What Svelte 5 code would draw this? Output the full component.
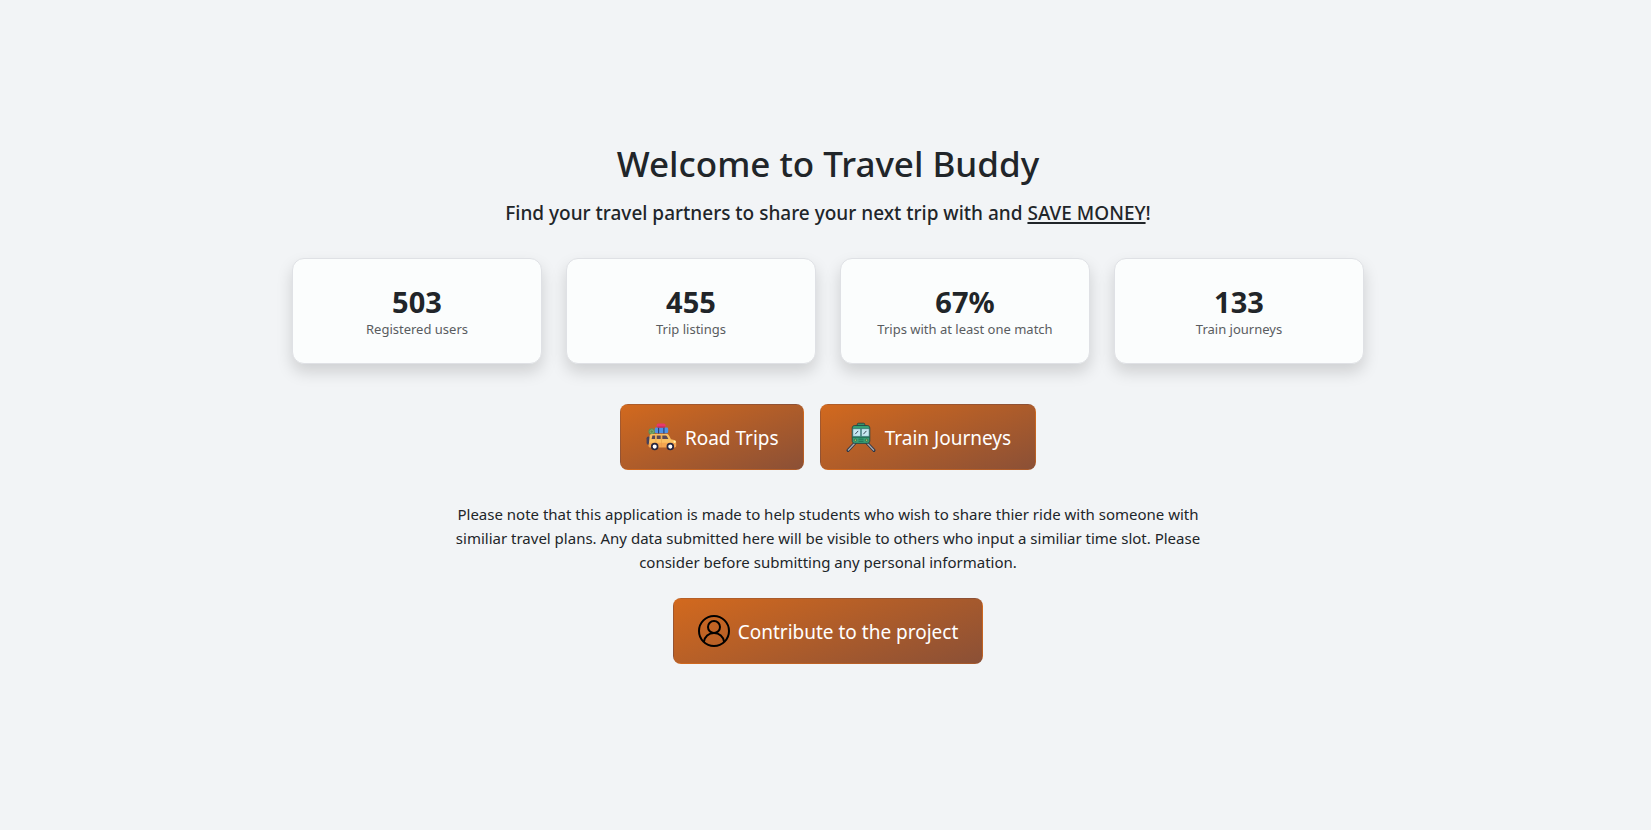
<script>
  const stats = [
    { value: '503', label: 'Registered users' },
    { value: '455', label: 'Trip listings' },
    { value: '67%', label: 'Trips with at least one match' },
    { value: '133', label: 'Train journeys' }
  ];
</script>

<main class="page">
  <header class="intro">
    <h1>Welcome to Travel Buddy</h1>
    <p class="tagline">Find your travel partners to share your next trip with and <u>SAVE MONEY</u>!</p>
  </header>

  <section class="stats" aria-label="Statistics">
    {#each stats as stat}
      <div class="card">
        <strong>{stat.value}</strong>
        <span>{stat.label}</span>
      </div>
    {/each}
  </section>

  <nav class="actions">
    <a class="button" href="#road">
      <svg viewBox="0 0 32 32" aria-hidden="true">
        <circle cx="6.8" cy="10.6" r="3.3" fill="#5f8f55" />
        <circle cx="6.8" cy="10.6" r="1.7" fill="none" stroke="#8fba78" stroke-width=".7" />
        <rect x="9.8" y="6.6" width="13.4" height="5.6" rx="1.4" fill="#4f92e6" />
        <path d="M13.6 6.4v6M18.9 6.4v6" stroke="#283c6c" stroke-width="1.1" />
        <rect x="11.6" y="2.4" width="9" height="4.2" rx="1.8" fill="#e6396a" />
        <path d="M12.4 6h7.600" stroke="#a82755" stroke-width=".8" />
        <rect x="1.600" y="15.400" width="4" height="8.400" rx="1.800" fill="#47415b" />
        <path d="M7 13h14.600c1.300 0 2 .7 2.500 1.700l1.900 3.500 3.300.8c1.200.3 1.800 1.200 1.800 2.400v3.300c0 .9-.6 1.500-1.500 1.500H5c-.9 0-1.400-.6-1.300-1.500l.9-9.300c.2-1.600.9-2.400 2.400-2.400Z" fill="#fbc061" />
        <path d="M4 21.800h27.100v2.900c0 .9-.6 1.500-1.500 1.500H5c-.9 0-1.400-.6-1.300-1.500Z" fill="#f5a54f" />
        <path d="M7.400 14.500h2.700v3.600H6.600Zm4.300 0h4v3.600h-4Zm5.600 0h3.300c.7 0 1.100.3 1.400.9l1.400 2.700h-6.100Z" fill="#5a4754" />
        <path d="M10.900 13.500v12M16.500 13.500v12" stroke="#e39a48" stroke-width=".5" />
        <circle cx="29.600" cy="20.800" r="1.100" fill="#fff0aa" />
        <g fill="#fff" stroke="#27253c" stroke-width="1.700"><circle cx="9.700" cy="25.600" r="2.900" /><circle cx="25.300" cy="25.600" r="2.900" /></g>
      </svg>
      <span>Road Trips</span>
    </a>
    <a class="button" href="#train">
      <svg viewBox="0 0 32 32" aria-hidden="true">
        <path d="M10 22 3 29.400M22 22l7 7.400" stroke="#263447" stroke-width="3" stroke-linecap="round" />
        <path d="m10 22-7 7.400M22 22l7 7.400" stroke="#a8a6aa" stroke-width="1.500" />
        <path d="M12.200 5V3.600c0-1 .5-1.400 1.300-1.400h5c.8 0 1.300.4 1.300 1.400V5" fill="#35936b" stroke="#203e43" stroke-width=".8" />
        <path d="M9.800 4.500h12.400c1.600 0 2.600 1 2.600 2.600v12.700c0 1.500-1 2.600-2.600 2.600H9.800c-1.600 0-2.600-1.100-2.600-2.600V7.100c0-1.600 1-2.600 2.600-2.600Z" fill="#379f73" stroke="#203e43" stroke-width=".8" />
        <path d="M7.800 7.700h7.900v7.700H7.800Zm8.500 0h7.900v7.700h-7.900Z" fill="#c6e9f2" stroke="#2c626a" stroke-width=".6" />
        <path d="m10.200 13.200 3-3.300m5.200 3.300 3-3.300" stroke="#263447" stroke-width=".9" />
        <path d="M7.500 16.400h17M13.500 18.200h5M13.500 20.300h5" stroke="#1c674f" stroke-width=".8" />
        <g fill="#a5c566" stroke="#235d46" stroke-width=".7"><circle cx="10.400" cy="19.200" r="1.200" /><circle cx="21.600" cy="19.200" r="1.200" /></g>
      </svg>
      <span>Train Journeys</span>
    </a>
  </nav>

  <p class="note">
    Please note that this application is made to help students who wish to share thier ride with
    someone with similiar travel plans. Any data submitted here will be visible to others who input a
    similiar time slot. Please consider before submitting any personal information.
  </p>

  <a class="button" href="#contribute">
    <svg viewBox="0 0 32 32" fill="none" stroke="#000" stroke-width="2" aria-hidden="true">
      <circle cx="16" cy="16" r="15" />
      <circle cx="16" cy="12" r="6" />
      <path d="M5.800 27c.8-5.200 4.800-9 10.200-9s9.400 3.800 10.200 9" />
    </svg>
    <span>Contribute to the project</span>
  </a>
</main>

<style>
  :global(body) {
    margin: 0;
    background: #f2f4f6;
  }

  .page {
    box-sizing: border-box;
    min-height: 100vh;
    padding: 140px 16px 32px 21px;
    display: flex;
    flex-direction: column;
    align-items: center;
    color: #212529;
    font: 15px/24px "Noto Sans", sans-serif;
    text-align: center;
  }

  h1 {
    margin: 0 0 8px;
    font-size: 35px;
    line-height: 48px;
    font-weight: 500;
  }

  .tagline {
    margin: 0;
    font-size: 19px;
    line-height: 34px;
    font-weight: 500;
  }

  u {
    text-underline-offset: 2px;
    text-decoration-thickness: 2px;
    text-decoration-skip-ink: none;
  }

  .stats {
    width: 100%;
    max-width: 1072px;
    margin: 28px 0 40px;
    display: grid;
    grid-template-columns: repeat(4, 1fr);
    gap: 24px;
  }

  .card {
    padding: 25px 16px;
    display: flex;
    flex-direction: column;
    border: 1px solid #dfe1e5;
    border-radius: 12px;
    background: #fbfdfd;
    box-shadow: 0 8px 16px rgba(0, 0, 0, 0.15);
  }

  .card strong {
    font-size: 29px;
    line-height: 36px;
    font-weight: 700;
  }

  .card span {
    font-size: 13px;
    line-height: 18px;
    color: #595c5f;
  }

  .actions {
    display: flex;
    flex-wrap: wrap;
    justify-content: center;
    gap: 16px;
  }

  .button {
    padding: 16px 24px;
    display: flex;
    align-items: center;
    gap: 8px;
    border: 1px solid transparent;
    border-radius: 8px;
    background-image: linear-gradient(160deg, #d2691e, #8b5036);
    color: #fff;
    font-size: 19px;
    line-height: 30px;
    text-decoration: none;
  }

  .button span {
    padding-top: 2px;
  }

  .button svg {
    width: 32px;
    height: 32px;
    flex: none;
  }

  .note {
    max-width: 760px;
    margin: 32px 0 24px;
  }

  @media (max-width: 800px) {
    .stats {
      grid-template-columns: repeat(2, 1fr);
    }
  }
</style>
